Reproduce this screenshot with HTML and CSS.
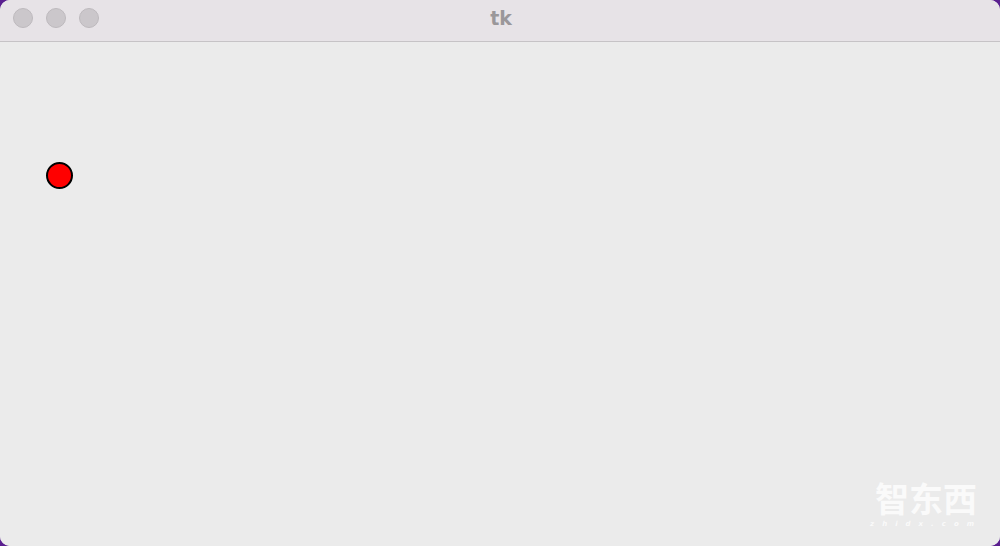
FILE: index.html
```html
<!DOCTYPE html>
<html>
<head>
<meta charset="utf-8">
<link rel="stylesheet" href="styles.css">
</head>
<body>
<div class="window">
  <div class="titlebar">
    <div class="lights">
      <span class="light"></span>
      <span class="light"></span>
      <span class="light"></span>
    </div>
    <div class="title">tk</div>
  </div>
  <div class="canvas">
    <div class="ball"></div>
    <div class="watermark">
      <div class="wm-main">智东西</div>
      <div class="wm-sub">zhidx.com</div>
    </div>
  </div>
</div>
</body>
</html>
```
FILE: styles.css
```css
html, body {
  margin: 0;
  padding: 0;
  width: 1000px;
  height: 546px;
  overflow: hidden;
  background: #5a1f8f;
}
.window {
  width: 1000px;
  height: 546px;
  border-radius: 10px;
  overflow: hidden;
  background: #ebebeb;
  display: flex;
  flex-direction: column;
}
.titlebar {
  height: 41px;
  flex: none;
  background: #e7e3e7;
  border-bottom: 1px solid #c6c3c6;
  position: relative;
  display: flex;
  align-items: center;
  justify-content: center;
}
.lights {
  position: absolute;
  left: 13px;
  top: 8px;
  display: flex;
  gap: 13px;
}
.light {
  width: 18px;
  height: 18px;
  border-radius: 50%;
  background: #cbc7cb;
  border: 1px solid #bdb9bd;
}
.title {
  font-family: "DejaVu Sans", sans-serif;
  font-weight: bold;
  font-size: 19px;
  color: #9a979a;
  margin-top: -5px;
  margin-left: 2px;
}
.canvas {
  flex: 1;
  position: relative;
  background: #ebebeb;
}
.ball {
  position: absolute;
  left: 46px;
  top: 120px;
  width: 23px;
  height: 23px;
  border-radius: 50%;
  background: #ff0000;
  border: 2px solid #000;
}
.watermark {
  position: absolute;
  right: 18px;
  bottom: 18px;
  display: flex;
  flex-direction: column;
  align-items: center;
  color: #fafafa;
  font-family: "Noto Sans CJK SC", sans-serif;
}
.wm-main {
  font-size: 34px;
  font-weight: bold;
  line-height: 40px;
  height: 40px;
}
.wm-sub {
  font-family: "DejaVu Sans", sans-serif;
  font-size: 7px;
  font-weight: bold;
  font-style: italic;
  letter-spacing: 8px;
  line-height: 8px;
  height: 8px;
  margin-top: 2px;
}
```
